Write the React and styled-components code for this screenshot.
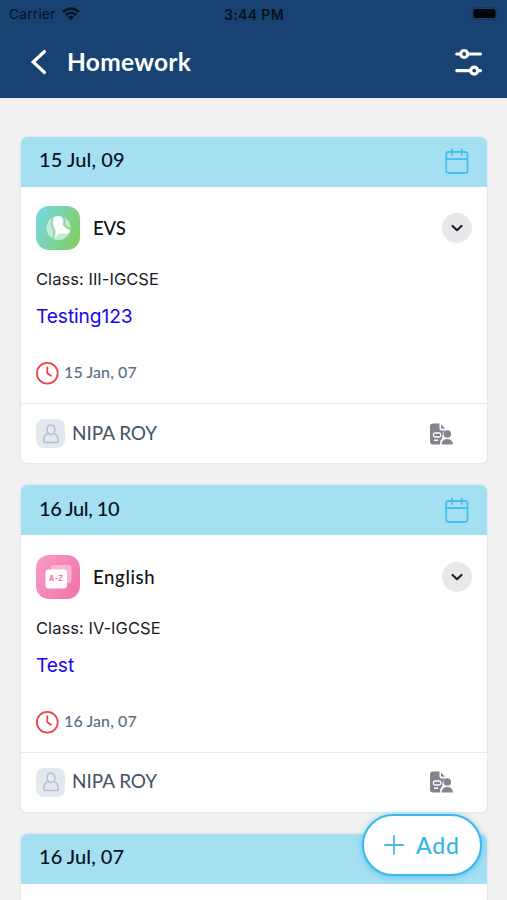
import React from "react";
import styled, { createGlobalStyle } from "styled-components";

const GlobalStyle = createGlobalStyle`
  * { box-sizing: border-box; }
  body { margin: 0; background: #f1f1f1; overflow: hidden; }
`;

const Screen = styled.main`
  position: relative;
  height: 900px;
  overflow: hidden;
  background: #f1f1f1;
  font-family: Lato, sans-serif;
`;

const TopBar = styled.header`
  height: 98px;
  background: #184272;
  color: #fff;
`;

const StatusBar = styled.div`
  height: 28px;
  padding: 0 7px 0 9px;
  display: grid;
  grid-template-columns: 1fr auto 1fr;
  align-items: center;
  color: #07111f;
  font-family: Inter, sans-serif;
`;

const Carrier = styled.span`
  display: flex;
  align-items: center;
  gap: 6px;
  font-size: 13.5px;
  letter-spacing: 0.35px;
`;

const Time = styled.span`
  margin-right: 1px;
  font-size: 14px;
  font-weight: 600;
  letter-spacing: 0.35px;
`;

const BatterySlot = styled.span`
  display: flex;
  justify-content: flex-end;
`;

const NavBar = styled.div`
  height: 68px;
  padding: 0 24px 0 29px;
  display: flex;
  align-items: center;
`;

const Title = styled.h1`
  flex: 1;
  margin: 0 0 0 18px;
  font: 700 24.5px/34px Lato, sans-serif;
  letter-spacing: 0.3px;
`;

const CardList = styled.div`
  padding: 38.6px 20px 0 21px;
  display: flex;
  flex-direction: column;
  gap: 22.2px;
`;

const Card = styled.article`
  height: 326.5px;
  flex: none;
  display: flex;
  flex-direction: column;
  background: #fff;
  border-radius: 6px;
  overflow: hidden;
  box-shadow: 0 0 3px rgba(90, 110, 120, 0.16);
`;

const CardHeader = styled.div`
  height: 50px;
  flex: none;
  padding: 0 18px 5px 18px;
  display: flex;
  align-items: center;
  justify-content: space-between;
  background: #a5dff2;
`;

const DateLabel = styled.span`
  font-size: 20px;
  font-weight: 500;
  line-height: 28px;
  letter-spacing: ${(p) => p.$spacing};
  color: #07131c;
`;

const CalendarSlot = styled.span`
  display: flex;
  padding-top: 6px;
`;

const CardBody = styled.div`
  height: 217.4px;
  flex: none;
  padding: 19.3px 15px 0;
  border-bottom: 1px solid #e9eced;
`;

const SubjectRow = styled.div`
  height: 44px;
  display: flex;
  align-items: center;
`;

const Subject = styled.span`
  flex: 1;
  margin-left: 13px;
  font-size: 18.5px;
  font-weight: 500;
  letter-spacing: ${(p) => p.$spacing};
  color: #101214;
`;

const Expand = styled.button`
  width: 30px;
  height: 30px;
  padding: 0;
  border: 0;
  border-radius: 50%;
  background: #e7e8ea;
  display: grid;
  place-items: center;
`;

const ClassName = styled.p`
  margin: 17px 0 0;
  font: 400 16.5px/24px Inter, sans-serif;
  letter-spacing: 0.04px;
  color: #1b1b1d;
`;

const Task = styled.p`
  margin: 11px 0 0;
  font: 400 19.2px/28px Inter, sans-serif;
  letter-spacing: -0.1px;
  color: #1408e8;
`;

const Due = styled.div`
  height: 24px;
  margin-top: 31px;
  display: flex;
  align-items: center;
  gap: 5px;
`;

const DueDate = styled.span`
  font-size: 16px;
  font-weight: 500;
  line-height: 20px;
  padding-bottom: 2px;
  letter-spacing: 0.1px;
  color: #587085;
`;

const CardFooter = styled.div`
  flex: 1;
  padding: 0 34px 0 15px;
  display: flex;
  align-items: center;
`;

const Avatar = styled.span`
  width: 29px;
  height: 29px;
  border-radius: 8px;
  background: #e4e9f0;
  display: grid;
  place-items: center;
`;

const Teacher = styled.span`
  flex: 1;
  margin: -3px 0 0 7px;
  font-size: 19px;
  color: #455364;
  letter-spacing: -0.05px;
`;

const AddButton = styled.button`
  position: absolute;
  left: 362px;
  top: 814px;
  width: 120px;
  height: 62px;
  padding: 0 0 1px 20px;
  border: 2px solid #37b8ee;
  border-radius: 31px;
  background: #fff;
  box-shadow: 0 1px 6px rgba(45, 181, 237, 0.65);
  display: flex;
  align-items: center;
  gap: 12px;
  font: 500 23px/30px Lato, sans-serif;
  letter-spacing: 0.8px;
  color: #37b5e9;
`;

const WifiIcon = () => (
  <svg width="18" height="14" viewBox="0 0 18 14" fill="none" stroke="#07111f" strokeWidth="2.5">
    <path d="M1 5Q9 -2 17 5M4 8Q9 3.5 14 8" />
    <path d="M6 10Q9 7.5 12 10L9 13Z" fill="#07111f" stroke="none" />
  </svg>
);

const BatteryIcon = () => (
  <svg width="29" height="14" viewBox="0 0 29 14">
    <rect x="1" y="0.5" width="25" height="12" rx="3.5" fill="none" stroke="#143762" />
    <rect x="2.5" y="2" width="22" height="9" rx="2" fill="#02050a" />
    <path d="M27 5q2 2 0 4z" fill="#143762" />
  </svg>
);

const BackIcon = () => (
  <svg width="20" height="28" viewBox="0 0 20 28" fill="none" stroke="#fff" strokeWidth="3.2" strokeLinecap="round" strokeLinejoin="miter">
    <path d="M15.5 3.5L4.2 14L15.5 24.5" />
  </svg>
);

const FilterIcon = () => (
  <svg width="29" height="29" viewBox="0 0 29 29" fill="none" stroke="#fff" strokeWidth="3.2" strokeLinecap="round">
    <path d="M2.8 6H26.5M2.8 22.6H26.5" />
    <circle cx="10.2" cy="6" r="3.5" fill="#184272" />
    <circle cx="20.2" cy="22.6" r="3.5" fill="#184272" />
  </svg>
);

const CalendarIcon = () => (
  <svg width="25" height="28" viewBox="0 0 25 28" fill="none" stroke="#49bff0" strokeWidth="1.8" strokeLinecap="round">
    <rect x="2.2" y="4" width="21.3" height="21" rx="2.4" />
    <path d="M2.2 11H23.5M8 1.5V7M17.7 1.5V7" />
  </svg>
);

const ChevronIcon = () => (
  <svg width="14" height="10" viewBox="0 0 14 10" fill="none" stroke="#202124" strokeWidth="2.2" strokeLinecap="round" strokeLinejoin="round">
    <path d="M2.5 3L7 7.2L11.5 3" />
  </svg>
);

const EvsIcon = () => (
  <svg width="44" height="44" viewBox="0 0 44 44">
    <defs>
      <linearGradient id="evs" x1="0" y1=".3" x2="1" y2=".7">
        <stop stopColor="#77d7de" />
        <stop offset="1" stopColor="#7fcf62" />
      </linearGradient>
      <clipPath id="globe"><circle cx="22.5" cy="22" r="12" /></clipPath>
    </defs>
    <rect width="44" height="44" rx="13" fill="url(#evs)" />
    <circle cx="22.5" cy="22" r="12" fill="#fff" fillOpacity=".55" />
    <g clipPath="url(#globe)" fill="none" stroke="#86d4a4" strokeWidth="1.5">
      <path d="M15.5 10Q17 13 15.5 17Q15 20 17.500 23Q19.500 25 17.500 29L17 34" />
      <path d="M27 10Q29.500 14 28 18.500L31.500 21.500L35 23" />
    </g>
    <path d="M18 11.5Q21 9 25.5 11Q27.500 15 26.500 19Q28.500 20 29.500 22.500L34.500 25Q33 28.500 28.500 27.500L22.500 27.500L19 32.500Q20.500 26 19 23Q16 18 18 11.500Z" fill="#fff" />
  </svg>
);

const EnglishIcon = () => (
  <svg width="44" height="44" viewBox="0 0 44 44">
    <defs>
      <linearGradient id="english" x1="0" y1="0" x2="1" y2=".6">
        <stop stopColor="#f99bc5" />
        <stop offset="1" stopColor="#f178ae" />
      </linearGradient>
    </defs>
    <rect width="44" height="44" rx="13" fill="url(#english)" />
    <rect x="15" y="10" width="20.5" height="18" rx="3" fill="#fff" fillOpacity=".4" />
    <rect x="9.5" y="14.5" width="21.5" height="19" rx="3" fill="#fff" />
    <text x="20.3" y="26" textAnchor="middle" fontFamily="Inter, sans-serif" fontWeight="800" fontSize="7" letterSpacing=".4" fill="#f27bad">A-Z</text>
  </svg>
);

const ClockIcon = () => (
  <svg width="23" height="24" viewBox="0 0 23 24" fill="none" stroke="#ee4348" strokeWidth="1.8" strokeLinecap="round" strokeLinejoin="round">
    <circle cx="11.3" cy="12.3" r="10.4" />
    <path d="M11.3 6.3V12.3L15 14.8" />
  </svg>
);

const PersonIcon = () => (
  <svg width="18" height="22" viewBox="0 0 18 22" fill="none" stroke="#b6c1d0" strokeWidth="1.5" strokeLinejoin="round">
    <rect x="5.2" y="2" width="7.6" height="9.5" rx="3.8" />
    <path d="M5.5 10.8C3 12 2 14.5 1.7 17Q1.5 19.5 4 19.5H14Q16.5 19.5 16.3 17C16 14.5 15 12 12.5 10.8" />
  </svg>
);

const DocumentPersonIcon = () => (
  <svg width="24" height="24" viewBox="0 0 24 24">
    <path d="M4 1.5H10.5V6.5Q10.5 8.5 12.5 8.5H16Q13 11 13.3 16Q11 18 11 22.5H4Q1 22.5 1 19.5V4.5Q1 1.5 4 1.5Z" fill="#85838e" />
    <path d="M12 2.3L16 6.7H13Q12 6.7 12 5.7Z" fill="#85838e" />
    <rect x="4.5" y="11" width="7.2" height="4" rx="1.5" fill="none" stroke="#fff" strokeWidth="1.3" />
    <path d="M5 18.2H9" stroke="#fff" strokeWidth="1.4" />
    <circle cx="18.3" cy="12" r="3.8" fill="#85838e" />
    <path d="M12.5 22.5Q12.8 17 18.3 17Q23.6 17 23.9 22.5Z" fill="#85838e" />
  </svg>
);

const PlusIcon = () => (
  <svg width="20" height="20" viewBox="0 0 20 20" fill="none" stroke="#4bb7e6" strokeWidth="1.8" strokeLinecap="round">
    <path d="M10 1V19M1 10H19" />
  </svg>
);

const homework = [
  { date: "15 Jul, 09", dateSpacing: "0.1px", subject: "EVS", subjectSpacing: "-0.1px", Icon: EvsIcon, className: "Class: III-IGCSE", task: "Testing123", due: "15 Jan, 07" },
  { date: "16 Jul, 10", dateSpacing: "-0.45px", subject: "English", subjectSpacing: "0.65px", Icon: EnglishIcon, className: "Class: IV-IGCSE", task: "Test", due: "16 Jan, 07" },
  { date: "16 Jul, 07", dateSpacing: "0.05px" },
];

function HomeworkCard({ item }) {
  const { Icon } = item;
  return (
    <Card>
      <CardHeader>
        <DateLabel $spacing={item.dateSpacing}>{item.date}</DateLabel>
        <CalendarSlot><CalendarIcon /></CalendarSlot>
      </CardHeader>
      {Icon && (
        <>
          <CardBody>
            <SubjectRow>
              <Icon />
              <Subject $spacing={item.subjectSpacing}>{item.subject}</Subject>
              <Expand aria-label="Expand"><ChevronIcon /></Expand>
            </SubjectRow>
            <ClassName>{item.className}</ClassName>
            <Task>{item.task}</Task>
            <Due><ClockIcon /><DueDate>{item.due}</DueDate></Due>
          </CardBody>
          <CardFooter>
            <Avatar><PersonIcon /></Avatar>
            <Teacher>NIPA ROY</Teacher>
            <DocumentPersonIcon />
          </CardFooter>
        </>
      )}
    </Card>
  );
}

export default function App() {
  return (
    <Screen>
      <GlobalStyle />
      <TopBar>
        <StatusBar>
          <Carrier>Carrier <WifiIcon /></Carrier>
          <Time>3:44 PM</Time>
          <BatterySlot><BatteryIcon /></BatterySlot>
        </StatusBar>
        <NavBar>
          <BackIcon />
          <Title>Homework</Title>
          <FilterIcon />
        </NavBar>
      </TopBar>
      <CardList>
        {homework.map((item) => <HomeworkCard key={item.date} item={item} />)}
      </CardList>
      <AddButton><PlusIcon />Add</AddButton>
    </Screen>
  );
}
